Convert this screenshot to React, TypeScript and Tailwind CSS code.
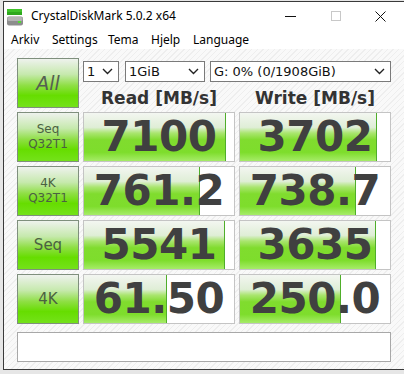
import React from 'react';

const rows = [
  { label: ['Seq', 'Q32T1'], read: '7100', readFill: 142, write: '3702', writeFill: 137 },
  { label: ['4K', 'Q32T1'], read: '761.2', readFill: 116, write: '738.7', writeFill: 116 },
  { label: ['Seq'], read: '5541', readFill: 141, write: '3635', writeFill: 136 },
  { label: ['4K'], read: '61.50', readFill: 83, write: '250.0', writeFill: 101 },
];

const menu = [
  { text: 'Arkiv', w: 'w-[41px]' },
  { text: 'Settings', w: 'w-[56px]' },
  { text: 'Tema', w: 'w-[43px]' },
  { text: 'Hjelp', w: 'w-[42px]' },
  { text: 'Language', w: 'w-[60px]' },
];

const btn =
  'flex flex-col items-center justify-center w-[62px] h-[50px] shrink-0 border border-[#7f8f7d] text-[#4b6142] bg-[linear-gradient(to_bottom,#eef2ed_0%,#c6e9ad_32%,#8fdf45_55%,#66dd00_76%,#74e21a_100%)]';

const Chevron = () => (
  <svg width="11" height="7" viewBox="0 0 11 7" className="shrink-0">
    <polyline points="1,1 5.5,5.5 10,1" fill="none" stroke="#222" strokeWidth="1.4" />
  </svg>
);

const Combo = ({ text, w }: { text: string; w: string }) => (
  <div className={`${w} h-[21px] bg-white border border-[#7a7a7a] flex items-center justify-between pl-[3px] pr-[5px] text-[13px] leading-[19px] text-[#111]`}>
    <span>{text}</span>
    <Chevron />
  </div>
);

const Cell = ({ value, fill }: { value: string; fill: number }) => (
  <div className="relative w-[152px] h-[50px] bg-white border border-[#c4c4c4] flex items-center justify-center">
    <div
      className="absolute left-0 top-0 bottom-0 border-r border-[#4fae2a] bg-[linear-gradient(to_bottom,#f3f6f1_0%,#dfeed6_30%,#a9e56e_42%,#80dc2e_56%,#7edd2c_82%,#a6ec68_100%)]"
      style={{ width: fill }}
    />
    <span className="relative text-[42px] font-bold leading-none text-[#404040] tracking-[-0.5px]">{value}</span>
  </div>
);

export default function App() {
  return (
    <div className="w-[404px] h-[374px] overflow-hidden bg-[#e6e6e6] font-['DejaVu_Sans',sans-serif]">
      <div className="ml-[3px] mt-[1px] w-[420px] h-[369px] border-l border-t border-b border-[#3a3a3a] flex flex-col bg-white">
        {/* title bar */}
        <div className="h-[28px] flex items-center font-['Noto_Sans',sans-serif] text-[12px] text-black">
          <div className="w-[264px] flex items-center">
            <svg width="16" height="17" viewBox="0 0 16 17" className="ml-[3px] mt-[2px]">
              <rect x="0" y="0" width="15" height="3" fill="#3fc22a" />
              <rect x="0" y="3" width="15" height="3" fill="#2ea81e" />
              <rect x="0" y="7.5" width="16" height="9" rx="2" fill="#8d8d8d" />
              <rect x="0.5" y="8" width="15" height="4" rx="1.5" fill="#b4b4b4" />
              <rect x="11" y="12" width="3" height="2" fill="#4fe030" />
            </svg>
            <span className="ml-[8px]">CrystalDiskMark 5.0.2 x64</span>
          </div>
          <div className="w-[45px] flex justify-center">
            <svg width="11" height="1" viewBox="0 0 11 1">
              <rect width="11" height="1" fill="#111" />
            </svg>
          </div>
          <div className="w-[45px] flex justify-center">
            <svg width="10" height="10" viewBox="0 0 10 10">
              <rect x="0.5" y="0.5" width="9" height="9" fill="none" stroke="#c8c8c8" />
            </svg>
          </div>
          <div className="w-[45px] flex justify-center">
            <svg width="11" height="11" viewBox="0 0 11 11">
              <path d="M0.5 0.5 L10.5 10.5 M10.5 0.5 L0.5 10.5" stroke="#111" strokeWidth="1" />
            </svg>
          </div>
        </div>
        {/* menu bar */}
        <div className="h-[19px] flex items-center pl-[7px] font-['Noto_Sans',sans-serif] text-[12px] text-black">
          {menu.map((m) => (
            <span key={m.text} className={m.w}>
              {m.text}
            </span>
          ))}
        </div>
        {/* client */}
        <div className="flex-1 pl-[13px] pt-[9px] bg-[repeating-linear-gradient(135deg,#f9f9f9_0px,#f9f9f9_3px,#eeeeee_3px,#eeeeee_4px)]">
          <div className="flex gap-[4px] h-[50px]">
            <div className={btn}>
              <span className="text-[19px] italic text-[#555f52]">All</span>
            </div>
            <div className="flex flex-col w-[308px]">
              <div className="flex mt-[3px] gap-[6px]">
                <Combo text="1" w="w-[36px]" />
                <Combo text="1GiB" w="w-[80px]" />
                <Combo text="G: 0% (0/1908GiB)" w="w-[181px] ml-[-1px]" />
              </div>
              <div className="flex gap-[4px] mt-[6px] text-[17px] leading-[20px] font-bold text-[#333]">
                <div className="w-[152px] text-center">Read [MB/s]</div>
                <div className="w-[152px] text-center">Write [MB/s]</div>
              </div>
            </div>
          </div>
          <div className="flex flex-col gap-[4px] mt-[4px]">
            {rows.map((r, i) => (
              <div key={i} className="flex gap-[4px]">
                <div className={btn}>
                  {r.label.length === 2 ? (
                    <>
                      <span className="text-[12px] leading-[15px]">{r.label[0]}</span>
                      <span className="text-[12px] leading-[15px]">{r.label[1]}</span>
                    </>
                  ) : (
                    <span className="text-[15px] leading-[18px]">{r.label[0]}</span>
                  )}
                </div>
                <Cell value={r.read} fill={r.readFill} />
                <Cell value={r.write} fill={r.writeFill} />
              </div>
            ))}
          </div>
          <div className="mt-[8px] w-[374px] h-[30px] bg-white border border-[#a8a8a8]" />
        </div>
      </div>
    </div>
  );
}
